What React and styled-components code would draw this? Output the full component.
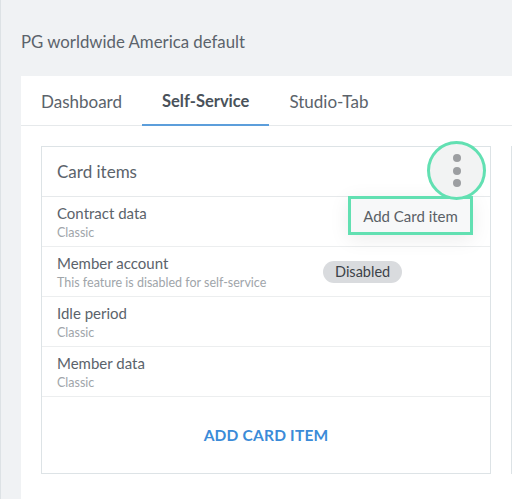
import React from 'react';
import styled, { createGlobalStyle } from 'styled-components';

const GlobalStyle = createGlobalStyle`
  html, body {
    margin: 0;
    padding: 0;
    background: #f0f2f4;
    font-family: Lato, "Open Sans", sans-serif;
  }
`;

const items = [
  { title: 'Contract data', sub: 'Classic' },
  { title: 'Member account', sub: 'This feature is disabled for self-service', disabled: true },
  { title: 'Idle period', sub: 'Classic' },
  { title: 'Member data', sub: 'Classic' },
];

const App = () => {
  return (
    <Page>
      <GlobalStyle />
      <PageTitle>PG worldwide America default</PageTitle>
      <Panel>
        <Tabs>
          <Tab>Dashboard</Tab>
          <Tab active>Self-Service</Tab>
          <Tab>Studio-Tab</Tab>
        </Tabs>
        <CardRow>
          <Card>
            <CardHeader>
              Card items
              <MenuButton>
                <Dot />
                <Dot />
                <Dot />
              </MenuButton>
              <Popup>Add Card item</Popup>
            </CardHeader>
            {items.map(item => (
              <ItemRow key={item.title}>
                <ItemText>
                  <ItemTitle>{item.title}</ItemTitle>
                  <ItemSub>{item.sub}</ItemSub>
                </ItemText>
                {item.disabled && <Badge>Disabled</Badge>}
              </ItemRow>
            ))}
            <Footer>
              <AddButton>ADD CARD ITEM</AddButton>
            </Footer>
          </Card>
          <Card />
        </CardRow>
      </Panel>
    </Page>
  );
};

const Page = styled.div`
  height: 499px;
  overflow: hidden;
  border-left: 1px solid #dde2e5;
  display: flex;
  flex-direction: column;
  box-sizing: border-box;
`;

const PageTitle = styled.div`
  height: 76px;
  display: flex;
  align-items: center;
  padding: 6px 0 0 20px;
  box-sizing: border-box;
  font-size: 16.8px;
  color: #5b636b;
`;

const Panel = styled.div`
  flex: 1;
  margin-left: 20px;
  background: #fff;
  overflow: hidden;
`;

const Tabs = styled.div`
  display: flex;
  height: 50px;
  border-bottom: 1px solid #e6e9eb;
  box-sizing: border-box;
`;

const Tab = styled.div`
  padding: 2px 20px 0;
  display: flex;
  align-items: center;
  font-size: ${props => (props.active ? '16.5px' : '17px')};
  color: ${props => (props.active ? '#4a525a' : '#5b636b')};
  font-weight: ${props => (props.active ? 700 : 400)};
  border-bottom: 2px solid ${props => (props.active ? '#5c9edb' : 'transparent')};
  margin-bottom: -1px;
`;

const CardRow = styled.div`
  display: flex;
  gap: 20px;
  padding: 20px;
`;

const Card = styled.div`
  flex: 0 0 450px;
  width: 450px;
  height: 328px;
  border: 1px solid #dde3e6;
  box-sizing: border-box;
  display: flex;
  flex-direction: column;
`;

const CardHeader = styled.div`
  position: relative;
  height: 50px;
  box-sizing: border-box;
  display: flex;
  align-items: center;
  padding: 0 15px;
  border-bottom: 1px solid #e6e9eb;
  font-size: 17px;
  color: #5b636b;
  flex-shrink: 0;
`;

const MenuButton = styled.div`
  position: absolute;
  right: 4px;
  top: -6px;
  width: 59px;
  height: 59px;
  box-sizing: border-box;
  border-radius: 50%;
  border: 3px solid #62e0b2;
  background: #f2f3f3;
  display: flex;
  flex-direction: column;
  align-items: center;
  justify-content: center;
  gap: 4.5px;
  z-index: 2;
`;

const Dot = styled.span`
  width: 8px;
  height: 8px;
  border-radius: 50%;
  background: #9c9ea1;
`;

const Popup = styled.div`
  position: absolute;
  right: 17px;
  top: 49px;
  width: 125px;
  height: 39px;
  box-sizing: border-box;
  border: 3px solid #62e0b2;
  background: #f7f8f9;
  display: flex;
  align-items: center;
  justify-content: center;
  font-size: 15px;
  color: #5a6066;
  box-shadow: 0 4px 20px rgba(0, 0, 0, 0.08);
  z-index: 1;
`;

const ItemRow = styled.div`
  height: 50px;
  flex-shrink: 0;
  display: flex;
  align-items: center;
  padding: 0 15px;
  border-bottom: 1px solid #eceeef;
  box-sizing: border-box;
`;

const ItemText = styled.div`
  display: flex;
  flex-direction: column;
  gap: 3px;
  width: 266px;
`;

const ItemTitle = styled.div`
  font-size: 15px;
  color: #5b636b;
`;

const ItemSub = styled.div`
  font-size: 12.5px;
  color: #a0a5aa;
`;

const Badge = styled.span`
  height: 22px;
  padding: 0 12px;
  border-radius: 11px;
  background: #d9dbde;
  color: #3c4248;
  font-size: 14.5px;
  display: flex;
  align-items: center;
`;

const Footer = styled.div`
  flex: 1;
  display: flex;
  align-items: center;
  justify-content: center;
`;

const AddButton = styled.div`
  font-size: 15.5px;
  font-weight: 700;
  color: #3b8bd8;
  letter-spacing: 0.2px;
`;

export default App;
